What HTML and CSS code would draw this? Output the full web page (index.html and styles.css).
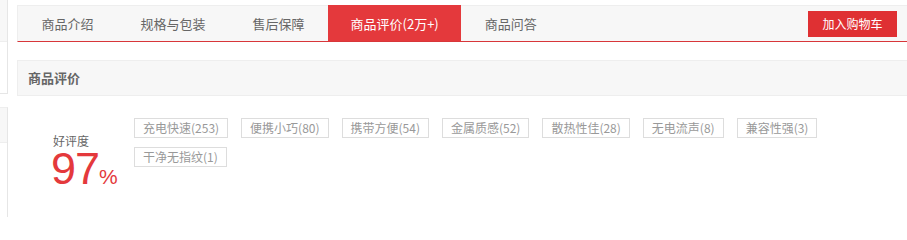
FILE: index.html
```html
<!DOCTYPE html>
<html lang="zh-CN">
<head>
<meta charset="utf-8">
<title>商品评价</title>
<link rel="stylesheet" href="styles.css">
</head>
<body>
<div class="page">
  <aside class="side">
    <div class="side-box side-box-top">
      <div class="side-head"></div>
    </div>
    <div class="side-box side-box-bottom">
      <div class="side-head"></div>
    </div>
  </aside>
  <main class="main">
    <div class="tabbar">
      <ul class="tabs">
        <li class="tab">商品介绍</li>
        <li class="tab">规格与包装</li>
        <li class="tab">售后保障</li>
        <li class="tab tab-active">商品评价(2万+)</li>
        <li class="tab">商品问答</li>
      </ul>
      <a class="cart-btn" href="#">加入购物车</a>
    </div>
    <div class="section-head">商品评价</div>
    <div class="review-body">
      <div class="rate">
        <div class="rate-label">好评度</div>
        <div class="rate-value"><span class="rate-num">97</span><span class="rate-pct">%</span></div>
      </div>
      <ul class="tags">
        <li class="tag">充电快速(253)</li>
        <li class="tag">便携小巧(80)</li>
        <li class="tag">携带方便(54)</li>
        <li class="tag">金属质感(52)</li>
        <li class="tag">散热性佳(28)</li>
        <li class="tag">无电流声(8)</li>
        <li class="tag">兼容性强(3)</li>
        <li class="tag">干净无指纹(1)</li>
      </ul>
    </div>
  </main>
</div>
</body>
</html>
```

FILE: styles.css
```css
html, body {
  margin: 0;
  padding: 0;
  background: #fff;
  overflow: hidden;
}

body {
  font-family: "Noto Sans CJK SC", "Noto Sans", sans-serif;
  font-size: 12px;
  color: #666;
}

ul {
  list-style: none;
  margin: 0;
  padding: 0;
}

.page {
  display: flex;
  align-items: stretch;
  height: 217px;
}

/* left column */
.side {
  width: 8px;
  display: flex;
  flex-direction: column;
  flex-shrink: 0;
}

.side-box {
  border-right: 1px solid #e6e6e6;
  box-sizing: border-box;
}

.side-box-top {
  height: 94px;
  border-bottom: 1px solid #e6e6e6;
}

.side-box-bottom {
  margin-top: 13px;
  flex: 1;
  border-top: 1px solid #eee;
}

.side-head {
  height: 41px;
  background: #f7f7f7;
  border-bottom: 1px solid #eee;
}

.side-box-bottom .side-head {
  height: 34px;
}

/* main column */
.main {
  flex: 1;
  margin-left: 9px;
  min-width: 0;
}

.tabbar {
  margin-top: 5px;
  display: flex;
  align-items: flex-start;
  height: 35px;
  background: #f7f7f7;
  border-top: 1px solid #eee;
  border-left: 1px solid #eee;
  border-bottom: 1px solid #d8363a;
}

.tabs {
  display: flex;
}

.tab {
  height: 35px;
  line-height: 35px;
  padding: 0 23.5px;
  font-size: 13px;
  color: #666;
  white-space: nowrap;
}

.tab-active {
  margin-top: -1px;
  height: 36px;
  line-height: 37px;
  background: #e4393c;
  color: #fff;
  padding: 0 22.5px;
}

.cart-btn {
  margin-left: auto;
  margin-right: 10px;
  margin-top: 5px;
  width: 89px;
  height: 26px;
  line-height: 26px;
  text-align: center;
  background: #df3033;
  color: #fff;
  font-size: 12px;
  text-decoration: none;
}

.section-head {
  margin-top: 18px;
  height: 34px;
  line-height: 34px;
  padding-left: 10px;
  background: #f7f7f7;
  border: 1px solid #eee;
  border-right: none;
  font-size: 13px;
  font-weight: bold;
  color: #666;
}

.review-body {
  display: flex;
  align-items: flex-start;
  padding: 22px 0 0 36px;
}

.rate {
  width: 81px;
  flex-shrink: 0;
  padding-top: 15px;
}

.rate-label {
  font-size: 12px;
  line-height: 16px;
  color: #666;
}

.rate-value {
  margin-left: -2px;
  font-family: "Liberation Sans", Arial, sans-serif;
  font-size: 45px;
  line-height: 40px;
  color: #e4393c;
  white-space: nowrap;
}

.rate-num {
  letter-spacing: -1px;
}

.rate-pct {
  font-size: 21px;
}

.tags {
  flex: 1;
  display: flex;
  flex-wrap: wrap;
  row-gap: 9px;
  padding-right: 10px;
}

.tag {
  margin-right: 13px;
  height: 18px;
  line-height: 18px;
  padding: 0 8px;
  border: 1px solid #ddd;
  font-size: 12px;
  color: #999;
  white-space: nowrap;
}
```
